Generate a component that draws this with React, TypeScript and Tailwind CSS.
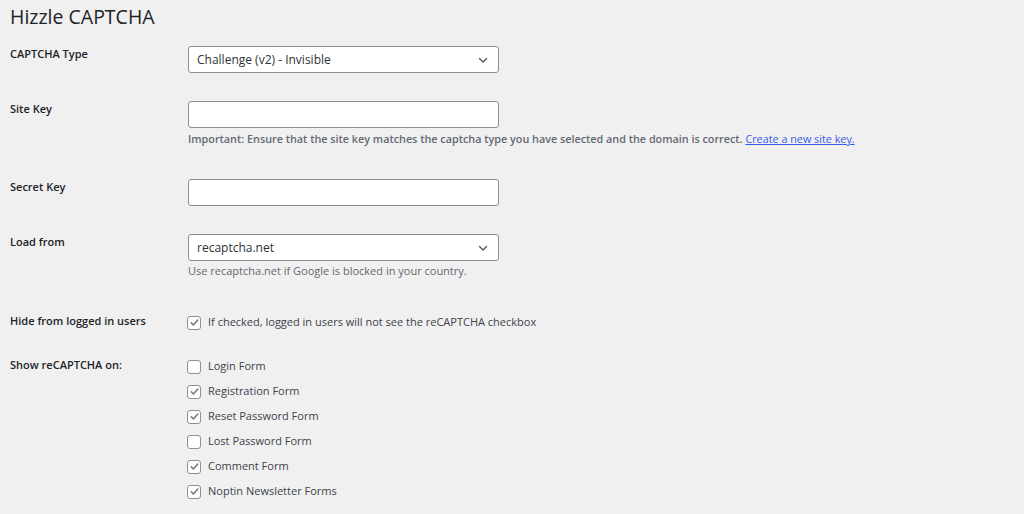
import type { ReactNode } from "react";

const font = { fontFamily: '"Open Sans", "Noto Sans", sans-serif' };

function Chevron() {
  return (
    <svg
      className="absolute right-[8px] top-1/2 h-[14px] w-[14px] -translate-y-1/2 text-[#50575e]"
      viewBox="0 0 20 20"
      fill="none"
      stroke="currentColor"
      strokeWidth={2}
      strokeLinecap="round"
      strokeLinejoin="round"
    >
      <path d="M5 8l5 5 5-5" />
    </svg>
  );
}

function Select({ value }: { value: string }) {
  return (
    <div className="relative flex h-[27px] w-[311px] items-center rounded-[3px] border border-[#8c8f94] bg-white pl-[8px] text-[12px] text-[#2c3338]">
      {value}
      <Chevron />
    </div>
  );
}

function TextInput() {
  return (
    <div className="h-[27px] w-[311px] rounded-[3px] border border-[#8c8f94] bg-white" />
  );
}

function Checkbox({ checked, label }: { checked: boolean; label: string }) {
  return (
    <label className="-ml-[1px] flex h-[25px] items-center gap-[7px] text-[11px] text-[#3c434a]">
      <span className="flex h-[14px] w-[14px] items-center justify-center rounded-[3px] border border-[#8c8f94] bg-white">
        {checked && (
          <svg
            className="h-[11px] w-[11px] text-[#787c82]"
            viewBox="0 0 12 12"
            fill="none"
            stroke="currentColor"
            strokeWidth={1.8}
            strokeLinecap="round"
            strokeLinejoin="round"
          >
            <path d="M2.5 6.3l2.3 2.4 4.8-5.4" />
          </svg>
        )}
      </span>
      {label}
    </label>
  );
}

function Row({
  label,
  children,
  className,
  tall,
}: {
  label: string;
  children: ReactNode;
  className?: string;
  tall?: boolean;
}) {
  return (
    <div className={`flex ${className ?? ""}`}>
      <div
        className={`w-[178px] shrink-0 text-[11px] font-semibold text-[#1d2327] ${
          tall ? "leading-[22px]" : "leading-[16px]"
        }`}
      >
        {label}
      </div>
      <div className="flex flex-col">{children}</div>
    </div>
  );
}

export default function App() {
  return (
    <div className="min-h-[514px] bg-[#f0f0f1] pl-[10px] pt-[5px]" style={font}>
      <h1 className="text-[19.5px] font-normal leading-[24px] text-[#1d2327]">
        Hizzle CAPTCHA
      </h1>

      <Row label="CAPTCHA Type" className="mt-[17px]">
        <Select value="Challenge (v2) - Invisible" />
      </Row>

      <Row label="Site Key" className="mt-[28px]">
        <TextInput />
        <p className="mt-[3px] text-[10.8px] font-semibold leading-[16px] text-[#646970]">
          Important: Ensure that the site key matches the captcha type you have
          selected and the domain is correct.{" "}
          <a href="#" className="font-normal text-[#3858e9] underline">
            Create a new site key.
          </a>
        </p>
      </Row>

      <Row label="Secret Key" className="mt-[32px]">
        <TextInput />
      </Row>

      <Row label="Load from" className="mt-[28px]">
        <Select value="recaptcha.net" />
        <p className="mt-[2px] text-[11px] leading-[16px] text-[#646970]">
          Use recaptcha.net if Google is blocked in your country.
        </p>
      </Row>

      <Row label="Hide from logged in users" className="mt-[31px]" tall>
        <Checkbox
          checked
          label="If checked, logged in users will not see the reCAPTCHA checkbox"
        />
      </Row>

      <Row label="Show reCAPTCHA on:" className="mt-[19px]" tall>
        <Checkbox checked={false} label="Login Form" />
        <Checkbox checked label="Registration Form" />
        <Checkbox checked label="Reset Password Form" />
        <Checkbox checked={false} label="Lost Password Form" />
        <Checkbox checked label="Comment Form" />
        <Checkbox checked label="Noptin Newsletter Forms" />
      </Row>
    </div>
  );
}
